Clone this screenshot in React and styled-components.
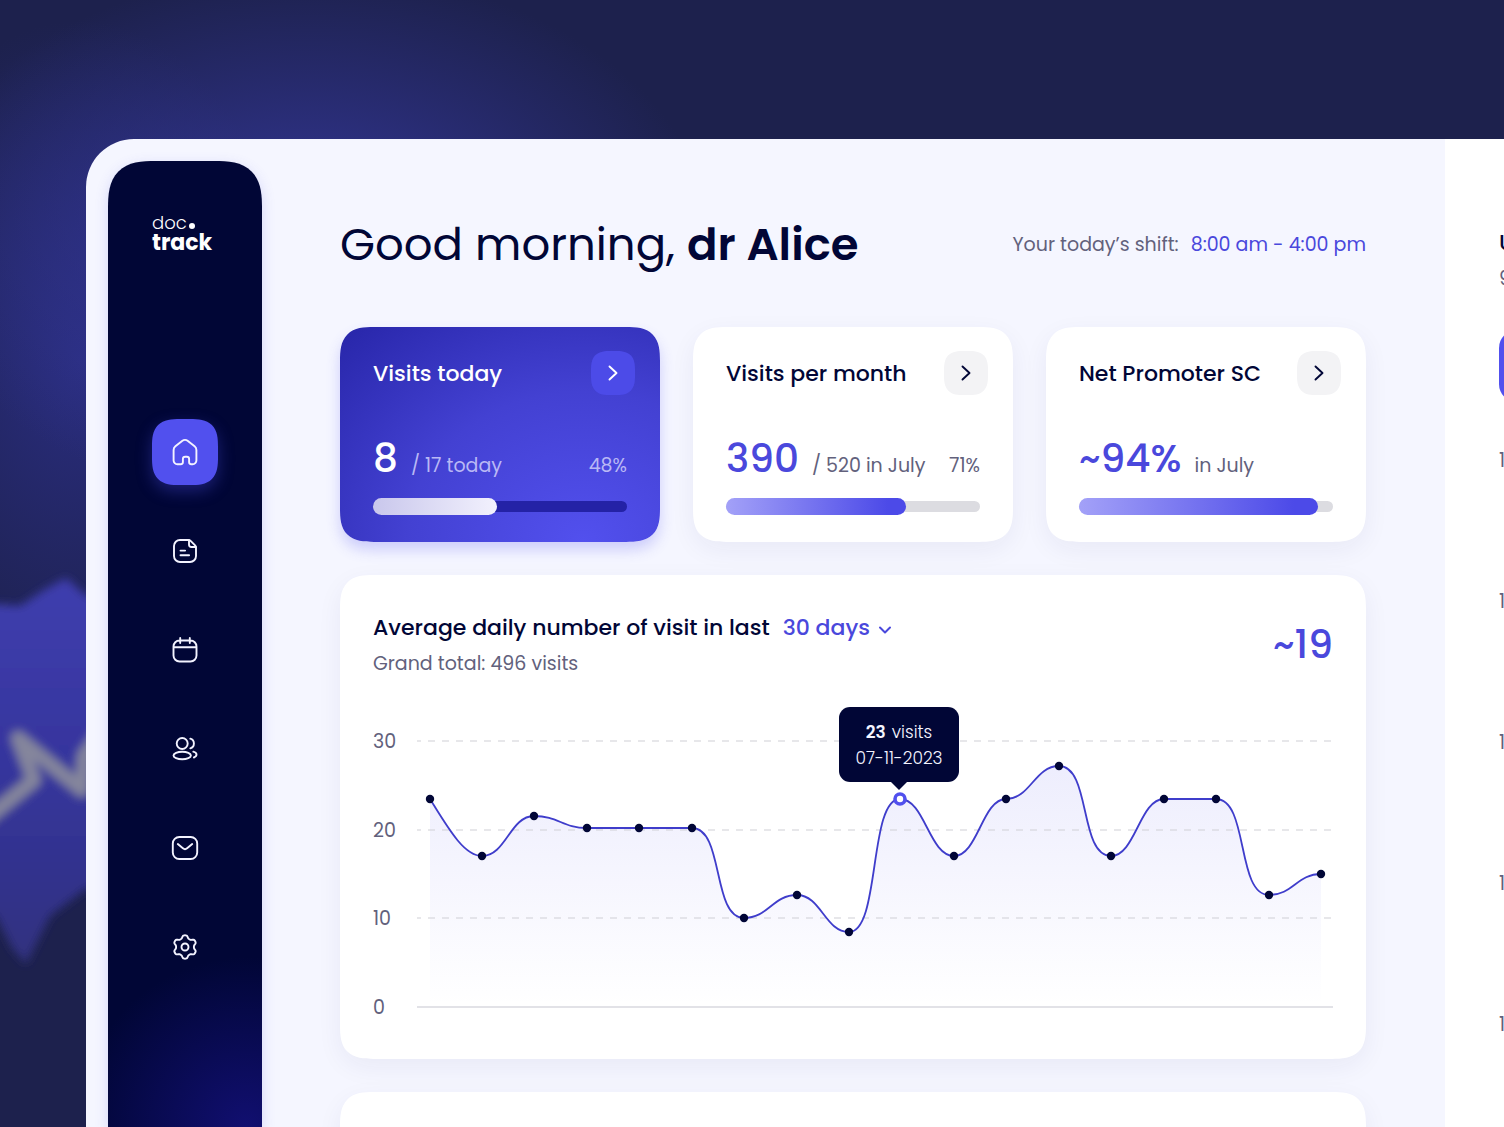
import React from "react";
import styled, { createGlobalStyle, css } from "styled-components";

const color = {
  navy: "#010636",
  indigo: "#4a48dc",
  violet: "#5150ee",
  muted: "#62617c",
  canvas: "#f5f6ff",
};

const GlobalStyle = createGlobalStyle`
  *, *::before, *::after { box-sizing: border-box; }
  body {
    margin: 0;
    background: #1d214d;
    color: ${color.navy};
    font-family: Poppins, Inter, "Noto Sans", sans-serif;
    font-size: 19px;
    line-height: 30px;
  }
  button, select { font: inherit; color: inherit; border: 0; padding: 0; cursor: pointer; }
  h1, h2, p, ul, ol { margin: 0; padding: 0; }
`;

const Page = styled.div`
  position: relative;
  height: 100vh;
  overflow: hidden;
  padding: 139px 0 0 86px;
  background:
    radial-gradient(ellipse 400px 270px at 310px 240px, #343799 0%, rgba(48, 51, 145, 0) 100%),
    radial-gradient(ellipse 220px 340px at 80px 360px, rgba(44, 47, 135, 0.85) 0%, rgba(44, 47, 130, 0) 100%),
    #1d214d;
`;

const Backdrop = styled.svg`
  position: absolute;
  left: 0;
  top: 540px;
  width: 120px;
  height: 460px;
`;

const Frame = styled.div`
  position: relative;
  display: flex;
  height: 100%;
  margin-right: -300px;
  border-radius: 48px 0 0 0;
  background: ${color.canvas};
  overflow: hidden;
`;

const Sidebar = styled.aside`
  flex: none;
  width: 154px;
  margin: 22px 0 0 22px;
  padding: 53px 0 0;
  display: flex;
  flex-direction: column;
  align-items: center;
  gap: 165px;
  border-radius: 36px 36px 0 0;
  @supports (corner-shape: superellipse(1.5)) {
    border-radius: 48px 48px 0 0;
    corner-shape: superellipse(1.5);
  }
  background:
    radial-gradient(ellipse 170px 170px at 90% 100%, #110f70 0%, rgba(17, 15, 112, 0) 100%),
    ${color.navy};
  box-shadow: 0 4px 14px rgba(74, 72, 220, 0.18);
`;

const Logo = styled.a`
  width: 66px;
  color: #fff;
  font-size: 18px;
  font-weight: 300;
  line-height: 18px;
  text-decoration: none;
  strong {
    display: block;
    font-size: 22px;
    line-height: 22px;
    font-weight: 700;
  }
`;

const LogoDot = styled.span`
  display: inline-block;
  width: 6px;
  height: 6px;
  margin-left: 2px;
  border-radius: 50%;
  background: #fff;
`;

const Nav = styled.nav`
  display: flex;
  flex-direction: column;
  gap: 33px;
`;

const NavButton = styled.button`
  width: 66px;
  height: 66px;
  display: grid;
  place-items: center;
  border-radius: 20px;
  @supports (corner-shape: superellipse(1.5)) {
    border-radius: 28px;
    corner-shape: superellipse(1.5);
  }
  color: #f3f3ff;
  background: transparent;
  ${({ $active }) => $active && css`
    background: ${color.violet};
    box-shadow: 0 6px 16px rgba(81, 80, 238, 0.35);
  `}
`;

const Icon = styled.svg`
  width: 30px;
  height: 30px;
  fill: none;
  stroke: currentColor;
  stroke-width: 1.9;
  stroke-linecap: round;
  stroke-linejoin: round;
`;

const Main = styled.main`
  flex: 1;
  min-width: 0;
  padding: 73px 79px 0 78px;
  display: flex;
  flex-direction: column;
  gap: 33px;
`;

const Header = styled.header`
  display: flex;
  align-items: center;
  justify-content: space-between;
  height: 66px;
  margin-bottom: 16px;
`;

const Title = styled.h1`
  font-size: 45px;
  line-height: 66px;
  font-weight: 400;
  white-space: nowrap;
  strong { font-weight: 600; }
`;

const Shift = styled.p`
  display: flex;
  gap: 12px;
  color: ${color.muted};
  white-space: nowrap;
  time { color: ${color.indigo}; }
`;

const Stats = styled.section`
  display: grid;
  grid-template-columns: repeat(3, minmax(0, 1fr));
  gap: 33px;
`;

const cardBase = css`
  border-radius: 26px;
  @supports (corner-shape: superellipse(1.5)) {
    border-radius: 34px;
    corner-shape: superellipse(1.5);
  }
  background: #fff;
  box-shadow: 0 8px 26px rgba(40, 40, 110, 0.06);
`;

const StatCard = styled.article`
  ${cardBase}
  padding: 24px 25px 27px 33px;
  color: ${({ $accent }) => ($accent ? "#fff" : color.navy)};
  ${({ $accent }) => $accent && css`
    background: radial-gradient(ellipse 110% 140% at 76% 100%, #5250ee 0%, #4341d2 50%, #2725a8 100%);
    box-shadow: 0 8px 14px rgba(81, 80, 238, 0.24);
  `}
`;

const StatHead = styled.div`
  display: flex;
  align-items: center;
  justify-content: space-between;
`;

const Heading = styled.h2`
  font-size: 22px;
  line-height: 33px;
  font-weight: 500;
  white-space: nowrap;
`;

const ArrowButton = styled.button`
  width: 44px;
  height: 44px;
  display: grid;
  place-items: center;
  border-radius: 15px;
  @supports (corner-shape: superellipse(1.5)) {
    border-radius: 20px;
    corner-shape: superellipse(1.5);
  }
  background: ${({ $accent }) => ($accent ? "#4c4be8" : "#f3f3f5")};
`;

const StatBody = styled.div`
  margin: 36px 8px 0 0;
`;

const Figures = styled.div`
  display: flex;
  align-items: baseline;
  height: 56px;
  white-space: nowrap;
  color: ${({ $accent }) => ($accent ? "#b9b8f5" : color.muted)};
`;

const Value = styled.strong`
  font-size: 39px;
  line-height: 56px;
  font-weight: 500;
  color: ${({ $accent }) => ($accent ? "#fff" : color.indigo)};
`;

const Detail = styled.span`
  margin-left: 13px;
`;

const Percent = styled.span`
  margin-left: auto;
`;

const Meter = styled.div`
  display: grid;
  align-items: center;
  margin-top: 11px;
  &::before {
    content: "";
    grid-area: 1 / 1;
    height: 11px;
    border-radius: 6px;
    background: ${({ $accent }) => ($accent ? "#2422a6" : "#dcdce1")};
  }
`;

const MeterFill = styled.div`
  grid-area: 1 / 1;
  height: 17px;
  border-radius: 9px;
  background: ${({ $accent }) =>
    $accent
      ? "linear-gradient(90deg, #c9c7ec, #f2f1fd)"
      : "linear-gradient(90deg, #a3a1f8, #7876f0 45%, #4c4ae8 90%)"};
`;

const ChartCard = styled.section`
  ${cardBase}
  flex: none;
  padding: 36px 33px 29px;
`;

const ChartHead = styled.div`
  display: flex;
  justify-content: space-between;
  align-items: center;
`;

const ChartTitle = styled.div`
  display: flex;
  align-items: center;
  gap: 13px;
  margin-bottom: 5px;
`;

const Period = styled.label`
  display: flex;
  align-items: center;
  gap: 8px;
  color: ${color.indigo};
  svg { margin-top: 4px; }
`;

const PeriodSelect = styled.select`
  appearance: none;
  field-sizing: content;
  background: transparent;
  font-size: 22px;
  line-height: 33px;
  font-weight: 500;
`;

const Muted = styled.p`
  color: ${color.muted};
`;

const Plot = styled.div`
  position: relative;
  margin-top: 21px;
`;

const PlotSvg = styled.svg`
  display: block;
  width: 100%;
  height: auto;
  overflow: visible;
  text { fill: ${color.muted}; font-size: 19px; }
`;

const Tooltip = styled.div`
  position: absolute;
  left: 54.8%;
  top: 7px;
  transform: translateX(-50%);
  width: 120px;
  height: 75px;
  padding: 12px 0;
  border-radius: 11px;
  background: ${color.navy};
  color: #f4f4ff;
  font-size: 17px;
  font-weight: 300;
  line-height: 26px;
  text-align: center;
  strong { margin-right: 6px; font-weight: 600; }
  &::after {
    content: "";
    position: absolute;
    left: 50%;
    top: 100%;
    transform: translateX(-50%);
    border: 8px solid transparent;
    border-top-color: ${color.navy};
    border-bottom: 0;
  }
`;

const NextCard = styled.section`
  ${cardBase}
  flex: none;
  height: 320px;
`;

const Schedule = styled.aside`
  flex: none;
  width: 359px;
  padding: 87px 24px 0 54px;
  background: #fff;
`;

const ScheduleCount = styled(Muted)`
  margin-top: 5px;
`;

const ScheduleTab = styled.button`
  display: block;
  width: 220px;
  height: 72px;
  margin: 36px 0 44px;
  border-radius: 18px;
  background: ${color.violet};
`;

const Hours = styled.ol`
  display: grid;
  gap: 111px;
  list-style: none;
  color: ${color.muted};
`;

// Six-lobed cog outline, one lobe pointing straight up.
const cogPath = Array.from({ length: 96 }, (_, i) => {
  const angle = (i / 96) * Math.PI * 2;
  const wave = Math.cos(6 * angle);
  const radius = 10.3 + 1.5 * Math.tanh(1.6 * wave);
  const x = 15 + radius * Math.sin(angle);
  const y = 15 - radius * Math.cos(angle);
  return `${i ? "L" : "M"}${x.toFixed(2)} ${y.toFixed(2)}`;
}).join("") + "Z";

const icons = {
  Home: (
    <path d="M3.600 13c0-1.500.7-2.800 1.800-3.700l6.700-5.300a4.700 4.700 0 0 1 5.800 0l6.700 5.300c1.100.9 1.800 2.200 1.800 3.700v10.500a3.800 3.800 0 0 1-3.800 3.800h-1.300a2.200 2.200 0 0 1-2.200-2.200v-3a2.300 2.300 0 0 0-2.300-2.300h-1.600a2.300 2.300 0 0 0-2.300 2.300v3a2.200 2.200 0 0 1-2.200 2.200H7.400a3.800 3.800 0 0 1-3.800-3.800z" />
  ),
  Documents: (
    <>
      <path d="M18.500 4H10a6 6 0 0 0-6 6v10a6 6 0 0 0 6 6h10a6 6 0 0 0 6-6v-8.500a3 3 0 0 0-.9-2.100l-4.500-4.500A3 3 0 0 0 18.500 4z" />
      <path d="M19 4.200V8.500a2.500 2.500 0 0 0 2.500 2.500h4.300M10.500 14.600h4.600M10.500 19.200h8.600" />
    </>
  ),
  Calendar: (
    <path d="M9.500 5.500h11a6 6 0 0 1 6 6V20.500a6 6 0 0 1-6 6h-11a6 6 0 0 1-6-6v-9a6 6 0 0 1 6-6zM3.500 12.300h23M10.200 3v5M19.800 3v5" />
  ),
  Patients: (
    <>
      <circle cx="12.200" cy="9.500" r="5.500" />
      <ellipse cx="12.200" cy="21.500" rx="8.700" ry="3.800" />
      <path d="M20.300 4.700a5 5 0 0 1 0 9.600M23.300 17.700c2 .6 3.200 1.500 3.200 2.900s-1 2.300-2.600 2.900" />
    </>
  ),
  Messages: (
    <>
      <rect x="2.800" y="4" width="24.400" height="22" rx="6.500" />
      <path d="m7.800 11 5.100 4.300a3.300 3.300 0 0 0 4.200 0l5.100-4.300" />
    </>
  ),
  Settings: (
    <>
      <circle cx="15" cy="15" r="3.500" />
      <path d={cogPath} />
    </>
  ),
};

const stats = [
  { title: "Visits today", value: "8", detail: "/ 17 today", percent: "48%", fill: 49, accent: true },
  { title: "Visits per month", value: "390", detail: "/ 520 in July", percent: "71%", fill: 71 },
  { title: "Net Promoter SC", value: "~94%", detail: "in July", fill: 94 },
];

const points = [
  [57, 99], [109, 156], [161, 116], [214, 128], [266, 128], [319, 128],
  [371, 218], [424, 195], [476, 232], [527, 99], [581, 156], [633, 99],
  [686, 66], [738, 156], [791, 99], [843, 99], [896, 195], [948, 174],
];

const linePath = points.reduce((path, [x, y], i) => {
  if (i === 0) return `M${x} ${y}`;
  const [px, py] = points[i - 1];
  if (i === 1) return `${path} C${px + 18} ${py + 29} ${x - 18} ${y} ${x} ${y}`;
  const reach = (x - px) * (Math.abs(y - py) > 80 ? 0.62 : 0.46);
  return `${path} C${px + reach} ${py} ${x - reach} ${y} ${x} ${y}`;
}, "");

const ticks = [[30, 41], [20, 130], [10, 218]];
const selected = 9;

function Chart() {
  return (
    <Plot>
      <PlotSvg viewBox="0 0 960 330" role="img" aria-label="Daily number of visits">
        <defs>
          <linearGradient id="area" gradientUnits="userSpaceOnUse" x1="0" y1="66" x2="0" y2="306">
            <stop offset="0" stopColor="#5150ee" stopOpacity="0.1" />
            <stop offset="1" stopColor="#5150ee" stopOpacity="0" />
          </linearGradient>
        </defs>
        <path d={`${linePath} V307 H57 Z`} fill="url(#area)" />
        {ticks.map(([label, y]) => (
          <g key={label}>
            <text x="0" y={y + 7}>{label}</text>
            <line x1="44" x2="960" y1={y} y2={y} stroke="#cfcfd6" strokeWidth="1.200" strokeDasharray="7 7" strokeDashoffset="3" />
          </g>
        ))}
        <text x="0" y="314">0</text>
        <line x1="44" x2="960" y1="307" y2="307" stroke="#d9d9df" strokeWidth="1.500" />
        <path d={linePath} fill="none" stroke="#3f3dcb" strokeWidth="1.800" />
        {points.map(([x, y], i) =>
          i === selected ? (
            <circle key={i} cx={x} cy={y} r="5" fill="#fff" stroke="#5150ee" strokeWidth="3.600" />
          ) : (
            <circle key={i} cx={x} cy={y} r="4.200" fill={color.navy} />
          )
        )}
      </PlotSvg>
      <Tooltip role="tooltip">
        <strong>23</strong>visits
        <br />
        07-11-2023
      </Tooltip>
    </Plot>
  );
}

function Stat({ title, value, detail, percent, fill, accent }) {
  return (
    <StatCard $accent={accent}>
      <StatHead>
        <Heading>{title}</Heading>
        <ArrowButton $accent={accent} aria-label={title}>
          <svg width="12" height="18" viewBox="0 0 12 18" fill="none" stroke="currentColor" strokeWidth="1.900" strokeLinecap="round" strokeLinejoin="round">
            <path d="m2.500 2.500 7 6.500-7 6.500" />
          </svg>
        </ArrowButton>
      </StatHead>
      <StatBody>
        <Figures $accent={accent}>
          <Value $accent={accent}>{value}</Value>
          <Detail>{detail}</Detail>
          {percent && <Percent>{percent}</Percent>}
        </Figures>
        <Meter $accent={accent} role="progressbar" aria-label={title} aria-valuenow={fill}>
          <MeterFill $accent={accent} style={{ width: `${fill}%` }} />
        </Meter>
      </StatBody>
    </StatCard>
  );
}

export default function App() {
  return (
    <>
      <GlobalStyle />
      <Page>
        <Backdrop viewBox="0 0 120 460" aria-hidden="true">
          <defs>
            <filter id="soft" x="-20%" y="-20%" width="140%" height="140%">
              <feGaussianBlur stdDeviation="5" />
            </filter>
            <linearGradient id="badge" x1="0" y1="0" x2="0" y2="1">
              <stop offset="0" stopColor="#3f3eae" />
              <stop offset="0.500" stopColor="#35349c" />
              <stop offset="1" stopColor="#30327f" />
            </linearGradient>
          </defs>
          <g filter="url(#soft)">
            <path d="M-30 62 20 66 44 50 66 38 84 54 140 80V330L84 350 50 376 26 424 12 408-4 376-30 360z" fill="url(#badge)" />
            <path d="M-20 284 34 240 18 198 82 250 84 216 110 180" fill="none" stroke="#85869c" strokeWidth="14" strokeLinejoin="round" />
          </g>
        </Backdrop>
        <Frame>
          <Sidebar>
            <Logo href="#">
              doc<LogoDot />
              <strong>track</strong>
            </Logo>
            <Nav aria-label="Main">
              {Object.entries(icons).map(([name, shape], i) => (
                <NavButton key={name} $active={i === 0} aria-label={name}>
                  <Icon viewBox="0 0 30 30">{shape}</Icon>
                </NavButton>
              ))}
            </Nav>
          </Sidebar>
          <Main>
            <Header>
              <Title>
                Good morning, <strong>dr Alice</strong>
              </Title>
              <Shift>
                <span>Your today’s shift:</span>
                <time>8:00 am - 4:00 pm</time>
              </Shift>
            </Header>
            <Stats>
              {stats.map((stat) => (
                <Stat key={stat.title} {...stat} />
              ))}
            </Stats>
            <ChartCard>
              <ChartHead>
                <div>
                  <ChartTitle>
                    <Heading>Average daily number of visit in last</Heading>
                    <Period>
                      <PeriodSelect aria-label="Period">
                        <option>30 days</option>
                      </PeriodSelect>
                      <svg width="14" height="10" viewBox="0 0 14 10" fill="none" stroke="currentColor" strokeWidth="2" strokeLinecap="round" strokeLinejoin="round">
                        <path d="m2 2.500 5 5 5-5" />
                      </svg>
                    </Period>
                  </ChartTitle>
                  <Muted>Grand total: 496 visits</Muted>
                </div>
                <Value>~19</Value>
              </ChartHead>
              <Chart />
            </ChartCard>
            <NextCard />
          </Main>
          <Schedule>
            <Heading>U</Heading>
            <ScheduleCount>9</ScheduleCount>
            <ScheduleTab aria-label="Schedule" />
            <Hours>
              {[0, 1, 2, 3, 4].map((row) => (
                <li key={row}>1</li>
              ))}
            </Hours>
          </Schedule>
        </Frame>
      </Page>
    </>
  );
}
